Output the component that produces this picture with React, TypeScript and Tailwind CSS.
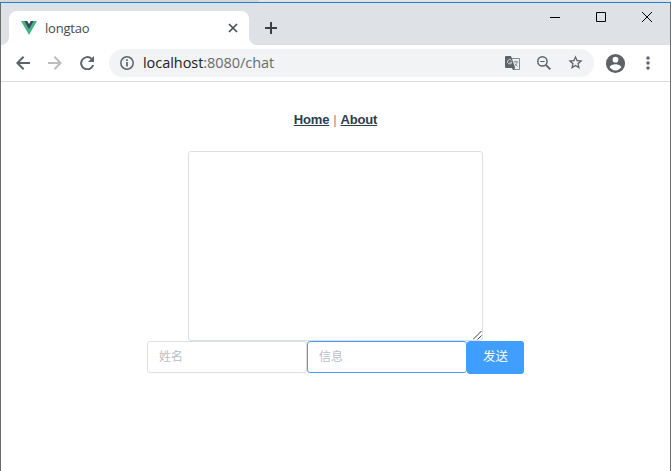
import React from "react";

function VueLogo() {
  return (
    <svg width="16" height="14" viewBox="0 0 16 14" className="ml-3 shrink-0">
      <path d="M0 0h3.3L8 8.2 12.7 0H16L8 14z" fill="#41b883" />
      <path d="M3.2 0h3L8 3.1 9.8 0h3L8 8.4z" fill="#35495e" />
    </svg>
  );
}

function Tab() {
  return (
    <div className="flex h-[34px] w-60 items-center rounded-t-lg bg-white">
      <VueLogo />
      <span className="ml-2 w-[183px] text-[13px] leading-4 tracking-[-0.2px] text-[#45494d]">longtao</span>
      <svg width="10" height="10" viewBox="0 0 10 10" className="shrink-0" stroke="#4a4d51" strokeWidth="1.7" fill="none">
        <path d="M1 1l8 8M9 1L1 9" />
      </svg>
    </div>
  );
}

function TabStrip() {
  return (
    <div className="flex h-[42px] items-end bg-[#dee1e6]">
      <div className="h-2 w-2 bg-white">
        <div className="h-2 w-2 rounded-br-lg bg-[#dee1e6]" />
      </div>
      <Tab />
      <div className="h-2 w-2 bg-white">
        <div className="h-2 w-2 rounded-bl-lg bg-[#dee1e6]" />
      </div>
      <svg width="12" height="12" viewBox="0 0 12 12" className="mb-[11px] ml-2" fill="none" stroke="#3c4043" strokeWidth="2">
        <path d="M6 0v12M0 6h12" />
      </svg>
      <div className="mb-[23px] ml-auto mr-[18px] flex items-center gap-9">
        <svg width="10" height="10" viewBox="0 0 10 10" fill="none" stroke="#000">
          <path d="M0 5.5h10" />
        </svg>
        <svg width="10" height="10" viewBox="0 0 10 10" fill="none" stroke="#000">
          <path d="M.5.5h9v9h-9z" />
        </svg>
        <svg width="10" height="10" viewBox="0 0 10 10" fill="none" stroke="#000">
          <path d="M0 0l10 10M10 0L0 10" />
        </svg>
      </div>
    </div>
  );
}

function Icon({ d, className, size = 20 }: { d: string; className: string; size?: number }) {
  return (
    <svg width={size} height={size} viewBox="0 0 24 24" fill="currentColor" className={`shrink-0 ${className}`}>
      <path d={d} />
    </svg>
  );
}

function TranslateIcon() {
  return (
    <svg width="15" height="15" viewBox="0 0 15 15" className="ml-auto shrink-0">
      <path d="M6 2.5h8.5v11H8z" fill="#f1f3f4" stroke="#85898c" />
      <path d="M1 0h5l4.2 12H1a1 1 0 0 1-1-1V1a1 1 0 0 1 1-1z" fill="#5f6368" />
      <path d="M6.4 4.4A2.2 2.2 0 1 0 6.8 6.3H4.7" fill="none" stroke="#d5d8da" />
      <path d="M8.6 5.8h4.6M10.9 4.8v1M12.3 6c-.4 2-1.5 3.2-3 4M10 7.5c.5 1.2 1.4 2 2.7 3" fill="none" stroke="#7d8185" strokeWidth=".9" />
      <path d="M7 12h3.2L8.4 14z" fill="#5f6368" />
    </svg>
  );
}

function Toolbar() {
  return (
    <div className="flex h-[37px] items-center border-b border-[#dadce0] bg-white text-[#5f6368]">
      <svg width="14" height="14" viewBox="0 0 14 14" className="ml-[15px] shrink-0" fill="none" stroke="currentColor" strokeWidth="2">
        <path d="M14 7H1.5M7.6.8L1.4 7l6.2 6.2" />
      </svg>
      <svg width="14" height="14" viewBox="0 0 14 14" className="ml-[18px] shrink-0" fill="none" stroke="#bbbdbf" strokeWidth="2">
        <path d="M0 7h12.5M6.4.8L12.6 7l-6.2 6.2" />
      </svg>
      <svg width="15" height="14" viewBox="0 0 15 14" className="ml-[18px] shrink-0" fill="none">
        <path d="M13.1 9A6.1 6.1 0 1 1 11.5 2.8" stroke="currentColor" strokeWidth="2" />
        <path d="M14 0v6H8z" fill="currentColor" />
      </svg>
      <div className="ml-[14px] flex h-7 w-[485px] items-center rounded-full bg-[#f1f3f4]">
        <svg width="14" height="14" viewBox="0 0 14 14" className="ml-[11px] shrink-0" fill="none" stroke="currentColor">
          <circle cx="7" cy="7" r="6.2" strokeWidth="1.5" />
          <path d="M7 3.3v1.6M7 6v4.6" strokeWidth="1.7" />
        </svg>
        <span className="ml-[9px] text-[14.5px] leading-5 tracking-[-0.05px] text-[#202124]">
          localhost<span className="text-[#696d71]">:8080/chat</span>
        </span>
        <TranslateIcon />
        <svg width="14" height="14" viewBox="0 0 14 14" className="ml-[17px] shrink-0" fill="none" stroke="currentColor">
          <circle cx="5.4" cy="5.4" r="4.6" strokeWidth="1.5" />
          <path d="M8.8 8.8l4.5 4.5" strokeWidth="1.9" />
          <path d="M3.2 5.5h4.4" />
        </svg>
        <Icon
          size={17}
          className="mb-px ml-4 mr-[10px]"
          d="M22 9.24l-7.19-.62L12 2 9.19 8.63 2 9.24l5.46 4.73L5.82 21 12 17.27 18.18 21l-1.63-7.03L22 9.24zM12 15.1l-3.5 2.1.9-4-3.1-2.7 4.1-.35L12 6.4l1.6 3.75 4.1.35-3.1 2.7.9 4L12 15.1z"
        />
      </div>
      <Icon
        size={23}
        className="ml-[10px]"
        d="M12 2a10 10 0 1 0 0 20 10 10 0 0 0 0-20zm0 3a3 3 0 1 1 0 6 3 3 0 0 1 0-6zm0 14.2a7.2 7.2 0 0 1-6-3.22c.03-1.99 4-3.08 6-3.08s5.97 1.09 6 3.08a7.2 7.2 0 0 1-6 3.22z"
      />
      <svg width="4" height="14" viewBox="0 0 4 14" className="ml-[19px]" fill="currentColor">
        <circle cx="2" cy="2" r="1.7" />
        <circle cx="2" cy="7" r="1.7" />
        <circle cx="2" cy="12" r="1.7" />
      </svg>
    </div>
  );
}

const field =
  "block h-8 w-40 rounded-[3px] border bg-white px-[11px] text-[12px] text-[#606266] outline-none placeholder:text-[#b9bec7]";

function Chat() {
  return (
    <main className="flex flex-1 flex-col items-center bg-white pt-[29px]">
      <nav className="flex h-[17px] items-center gap-1 whitespace-pre font-['Liberation_Sans',Arial,sans-serif] text-[13px] leading-[17px] tracking-[-0.15px] text-[#2c3e50]">
        <a href="#home" className="font-bold underline">Home</a>
        <span className="text-[#a08a76]">|</span>
        <a href="#about" className="font-bold underline">About</a>
      </nav>
      <div className="relative mt-[23px] h-[190px] w-[295px]">
        <textarea className="block size-full resize-none rounded-[3px] border border-[#dcdfe6] bg-white px-3 py-1 text-xs outline-none" />
        <svg width="9" height="9" viewBox="0 0 9 9" className="absolute bottom-px right-px" stroke="#444" fill="none">
          <path d="M0 8.5L8.5 0M4.5 8.5L8.5 4.5" />
        </svg>
      </div>
      <div className="flex font-['Liberation_Sans','Noto_Sans_CJK_SC',sans-serif]">
        <input placeholder="姓名" className={`${field} border-[#dcdfe6]`} />
        <input placeholder="信息" className={`${field} border-[#409eff]`} />
        <button className="h-[33px] w-[57px] rounded-[3px] bg-[#409eff] text-[12.5px] leading-none text-white">发送</button>
      </div>
    </main>
  );
}

export default function App() {
  return (
    <div className="flex h-[471px] w-[671px] flex-col overflow-hidden bg-white font-['Open_Sans','Noto_Sans',sans-serif]">
      <div className="flex h-0.5 shrink-0">
        <div className="w-[259px] bg-[#d5d7db]" />
        <div className="flex-1 bg-[#e4e4e6]" />
      </div>
      <div className="h-px shrink-0 bg-[#1883d7]" />
      <div className="flex flex-1 flex-col border-x border-[#6c6c6c]">
        <TabStrip />
        <Toolbar />
        <Chat />
      </div>
    </div>
  );
}
